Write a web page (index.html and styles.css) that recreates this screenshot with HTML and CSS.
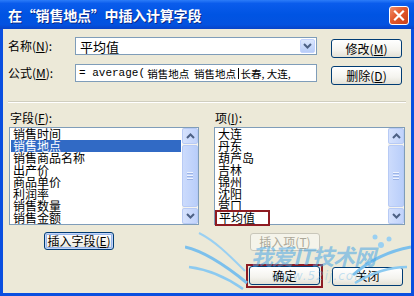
FILE: index.html
```html
<!DOCTYPE html>
<html lang="zh-CN">
<head>
    <meta charset="UTF-8">
    <meta name="viewport" content="width=device-width, initial-scale=1.0">
    <title>插入计算字段</title>
    <link rel="stylesheet" href="styles.css">
</head>
<body>

    <div class="window">
        <div class="titlebar">
            <span class="title">在“销售地点”中插入计算字段</span>
            <span class="close">
                <svg width="20" height="19" viewBox="0 0 20 19">
                    <path d="M6 5.5 L14 13.5 M14 5.5 L6 13.5" stroke="#fff" stroke-width="2.2" stroke-linecap="square"/>
                </svg>
            </span>
        </div>

        <div class="dialog">
            <div class="row row-name">
                <label class="label">名称(<u>N</u>):</label>
                <div class="field combo">
                    <span class="field-text">平均值</span>
                    <span class="combo-btn">
                        <svg width="9" height="6" viewBox="0 0 9 6">
                            <path d="M1 1 L4.5 4.5 L8 1" stroke="#4D6185" stroke-width="2" fill="none"/>
                        </svg>
                    </span>
                </div>
                <button class="btn side-btn">修改(<u>M</u>)</button>
            </div>

            <div class="row row-formula">
                <label class="label">公式(<u>M</u>):</label>
                <div class="field formula">
                    <span class="mono">= average(</span>&nbsp;销售地点&nbsp;&nbsp;销售地点&nbsp;<span class="caret"></span>长春,&nbsp;大连,
                </div>
                <button class="btn side-btn">删除(<u>D</u>)</button>
            </div>

            <div class="separator"></div>

            <div class="columns">
                <div class="column">
                    <div class="col-label">字段(<u>F</u>):</div>
                    <div class="listbox">
                        <ul class="items">
                            <li>销售时间</li>
                            <li class="selected">销售地点</li>
                            <li>销售商品名称</li>
                            <li>出产价</li>
                            <li>商品单价</li>
                            <li>利润率</li>
                            <li>销售数量</li>
                            <li>销售金额</li>
                        </ul>
                        <div class="scrollbar">
                            <span class="sb-btn">
                                <svg width="9" height="6" viewBox="0 0 9 6"><path d="M1 5 L4.5 1.5 L8 5" stroke="#4D6185" stroke-width="2" fill="none"/></svg>
                            </span>
                            <span class="sb-thumb"><i></i><i></i><i></i></span>
                            <span class="sb-btn">
                                <svg width="9" height="6" viewBox="0 0 9 6"><path d="M1 1 L4.5 4.5 L8 1" stroke="#4D6185" stroke-width="2" fill="none"/></svg>
                            </span>
                        </div>
                    </div>
                    <button class="btn insert-btn focused">插入字段(<u>E</u>)</button>
                </div>

                <div class="column">
                    <div class="col-label">项(<u>I</u>):</div>
                    <div class="listbox">
                        <ul class="items">
                            <li>大连</li>
                            <li>丹东</li>
                            <li>葫芦岛</li>
                            <li>吉林</li>
                            <li>锦州</li>
                            <li>沈阳</li>
                            <li>营口</li>
                            <li><span class="marked">平均值</span></li>
                        </ul>
                        <div class="scrollbar">
                            <span class="sb-btn">
                                <svg width="9" height="6" viewBox="0 0 9 6"><path d="M1 5 L4.5 1.5 L8 5" stroke="#4D6185" stroke-width="2" fill="none"/></svg>
                            </span>
                            <span class="sb-thumb"><i></i><i></i><i></i></span>
                            <span class="sb-btn">
                                <svg width="9" height="6" viewBox="0 0 9 6"><path d="M1 1 L4.5 4.5 L8 1" stroke="#4D6185" stroke-width="2" fill="none"/></svg>
                            </span>
                        </div>
                    </div>
                    <button class="btn insert-btn disabled">插入项(<u>T</u>)</button>
                </div>
            </div>

            <div class="footer">
                <span class="marked-btn"><button class="btn">确定</button></span>
                <button class="btn">关闭</button>
            </div>

            <!-- site watermark over the lower right corner -->
            <div class="watermark">
                <svg class="wings" width="230" height="70" viewBox="0 0 230 70">
                    <path d="M62 58 C40 40 18 26 0 22" stroke="#7CC0EC" stroke-width="3" fill="none"/>
                    <path d="M58 64 C38 50 20 44 4 42" stroke="#8CCAF0" stroke-width="2.5" fill="none"/>
                    <path d="M60 46 C44 30 30 16 14 8" stroke="#9AD0F2" stroke-width="2" fill="none"/>
                    <path d="M168 50 C186 34 204 26 226 22" stroke="#7CC0EC" stroke-width="3" fill="none"/>
                    <path d="M170 58 C190 46 206 42 222 42" stroke="#8CCAF0" stroke-width="2.5" fill="none"/>
                    <circle cx="196" cy="20" r="3" fill="#9AD0F2"/>
                    <circle cx="204" cy="14" r="2.5" fill="#9AD0F2"/>
                    <circle cx="190" cy="12" r="2.5" fill="#9AD0F2"/>
                </svg>
                <span class="wm-title">我爱IT技术网</span>
                <span class="wm-url">www.52ij.com</span>
            </div>
        </div>
    </div>

</body>
</html>
```

FILE: styles.css
```css
body {
    margin: 0;
    padding: 0;
    font-family: "Noto Sans CJK SC", "DejaVu Sans", sans-serif;
    font-size: 12px;
    color: #000;
}

.window {
    width: 414px;
    height: 296px;
    display: flex;
    flex-direction: column;
    background: #0A4FE0;
    box-sizing: border-box;
}

.titlebar {
    height: 29px;
    display: flex;
    align-items: center;
    justify-content: space-between;
    padding: 0 5px 0 8px;
    background: linear-gradient(#2C7CF8 0%, #0A5CEC 12%, #0054E3 50%, #0352E0 85%, #0843C8 100%);
    color: #fff;
}

.title {
    font-size: 14px;
    font-weight: bold;
    letter-spacing: -0.2px;
    text-shadow: 1px 1px 0 #0A2A8A;
}

.close {
    display: flex;
    width: 20px;
    height: 19px;
    border: 1px solid #fff;
    border-radius: 3px;
    background: linear-gradient(135deg, #F08E6A 0%, #E2582C 45%, #C8401A 100%);
    box-sizing: border-box;
    margin-top: 2px;
}

.close svg {
    margin: -1px;
}

.dialog {
    position: relative;
    flex: 1;
    margin: 0 3px 3px 3px;
    background: #ECE9D8;
    overflow: hidden;
}

.row {
    display: flex;
    align-items: flex-start;
    height: 21px;
    padding-left: 5px;
}

.row-name {
    margin-top: 8px;
}

.row-formula {
    margin-top: 6px;
}

.label {
    width: 67px;
    line-height: 18px;
}

u {
    text-decoration: underline;
}

.field {
    width: 242px;
    height: 18px;
    border: 1px solid #7F9DB9;
    background: #fff;
    box-sizing: border-box;
    display: flex;
    align-items: center;
    white-space: nowrap;
    overflow: hidden;
}

.field-text {
    padding-left: 4px;
    font-size: 13px;
    flex: 1;
}

.combo-btn {
    width: 15px;
    height: 14px;
    margin-right: 1px;
    border-radius: 2px;
    background: linear-gradient(#DCE7FD, #B8CDF8);
    border: 1px solid #C3D3FD;
    box-sizing: border-box;
    display: flex;
    align-items: center;
    justify-content: center;
}

.formula {
    padding-left: 3px;
    font-size: 10.5px;
}

.mono {
    font-family: "Liberation Mono", monospace;
    font-size: 11px;
}

.caret {
    display: inline-block;
    width: 1px;
    height: 11px;
    background: #000;
    margin-right: 1px;
}

.btn {
    font-family: "Noto Sans CJK SC", sans-serif;
    font-size: 12px;
    width: 71px;
    height: 19px;
    padding: 0;
    border: 1px solid #003C74;
    border-radius: 3px;
    background: linear-gradient(#FFFFFF 0%, #F4F3EE 60%, #E3E1D6 100%);
    color: #000;
    line-height: 16px;
    box-sizing: border-box;
}

.side-btn {
    margin-left: 14px;
    margin-top: 2px;
}

.separator {
    margin: 16px 5px 0 5px;
    height: 1px;
    background: #D0CEBF;
    border-bottom: 1px solid #fff;
}

.columns {
    display: flex;
    gap: 15px;
    padding-left: 6px;
}

.column {
    width: 191px;
    display: flex;
    flex-direction: column;
}

.column:first-child {
    width: 190px;
}

.col-label {
    margin-top: 8px;
    margin-bottom: 2px;
    padding-left: 1px;
    line-height: 14px;
}

.listbox {
    height: 98px;
    border: 1px solid #7F9DB9;
    background: #fff;
    box-sizing: border-box;
    display: flex;
}

.items {
    flex: 1;
    list-style: none;
    margin: 0;
    padding: 0 1px 0 1px;
    line-height: 12px;
    font-size: 12px;
}

.items li {
    height: 12px;
    padding-left: 2px;
}

.items li.selected {
    background: #316AC5;
    color: #fff;
}

.marked {
    display: inline-block;
    margin-left: -3px;
    padding: 0 13px 0 2px;
    height: 12px;
    border: 2px solid #8E1B22;
    margin-top: -2px;
}

.scrollbar {
    width: 16px;
    display: flex;
    flex-direction: column;
    background: #F4F3EE;
}

.sb-btn {
    height: 16px;
    box-sizing: border-box;
    border: 1px solid #B7CAF5;
    border-radius: 2px;
    background: linear-gradient(90deg, #D6E2FD, #C1D3FB);
    display: flex;
    align-items: center;
    justify-content: center;
}

.sb-thumb {
    flex: 1;
    margin: 1px 0;
    box-sizing: border-box;
    border: 1px solid #B7CAF5;
    border-radius: 2px;
    background: linear-gradient(90deg, #CCDBFC, #B9CEFA);
    display: flex;
    flex-direction: column;
    align-items: center;
    justify-content: center;
    gap: 1px;
}

.sb-thumb i {
    display: block;
    width: 6px;
    height: 1px;
    background: #EEF3FE;
    border-bottom: 1px solid #9BB3E6;
}

.insert-btn {
    width: 70px;
    height: 18px;
    margin-top: 7px;
    margin-left: 35px;
}

.insert-btn.focused {
    box-shadow: inset 0 0 0 1px #C2D4F7, inset 0 0 0 2px #97B6EC;
}

.insert-btn.disabled {
    margin-top: 8px;
    margin-left: 36px;
    border-color: #C9C7BA;
    color: #ACA899;
    background: #F5F4EA;
}

.footer {
    display: flex;
    justify-content: flex-end;
    align-items: center;
    gap: 9px;
    margin-top: 13px;
    padding-right: 8px;
}

.marked-btn {
    display: flex;
    padding: 0 1px 1px 1px;
    border: 2px solid #8E1B22;
}

.footer .btn {
    height: 19px;
}

.watermark {
    position: absolute;
    left: 182px;
    top: 196px;
    width: 230px;
    height: 70px;
    pointer-events: none;
}

.wings {
    position: absolute;
    left: 0;
    top: 0;
}

.wm-title {
    position: absolute;
    left: 66px;
    top: 14px;
    font-size: 22px;
    font-weight: bold;
    font-style: italic;
    color: rgba(70, 165, 230, 0.55);
    letter-spacing: -1px;
    white-space: nowrap;
}

.wm-url {
    position: absolute;
    left: 86px;
    top: 44px;
    font-family: "DejaVu Sans", sans-serif;
    font-size: 12px;
    font-style: italic;
    color: rgba(110, 185, 235, 0.4);
    letter-spacing: 1px;
}
```
